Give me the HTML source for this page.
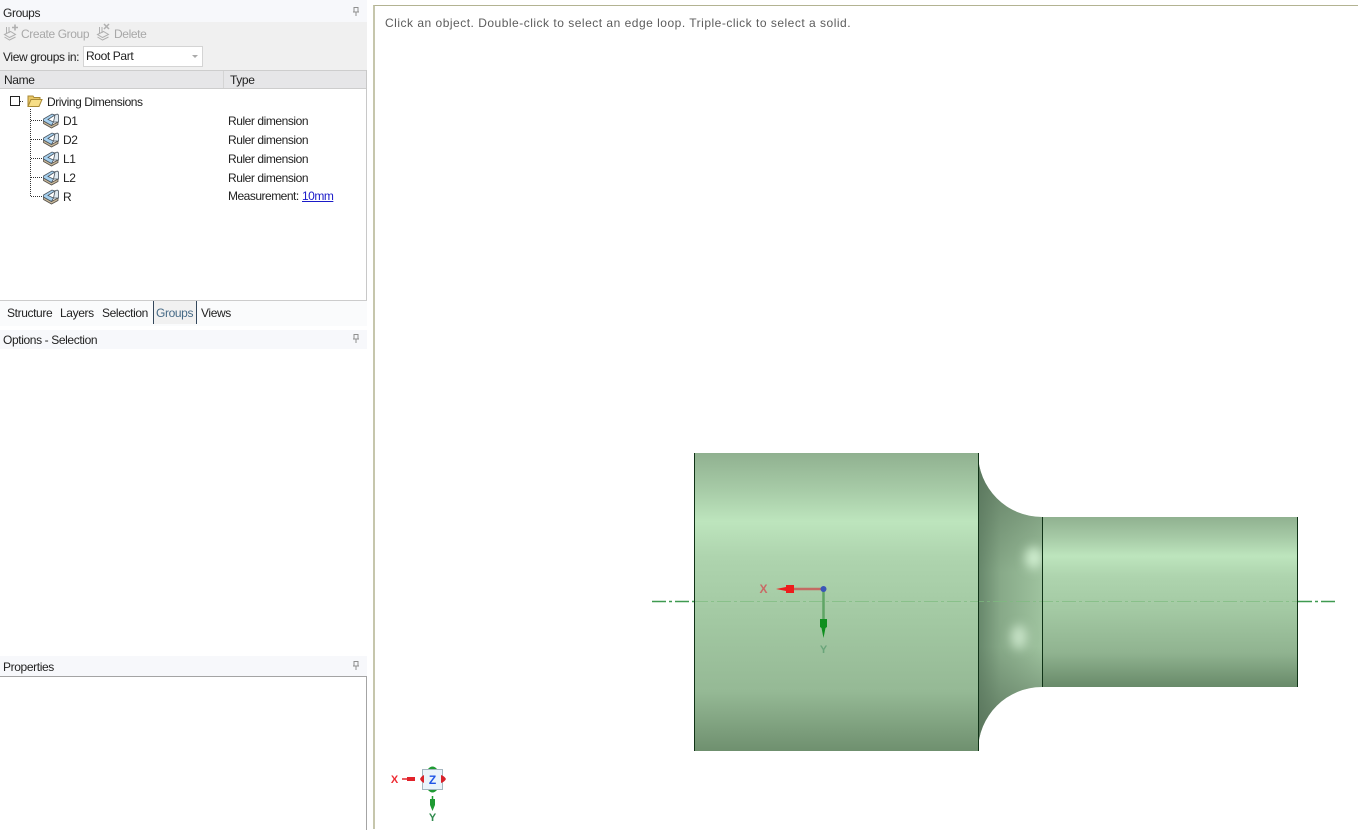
<!DOCTYPE html>
<html>
<head>
<meta charset="utf-8">
<style>
html,body{margin:0;padding:0;width:1358px;height:829px;overflow:hidden;background:#fff;font-family:"Liberation Sans",sans-serif;font-size:12px;color:#222}
.a{position:absolute;white-space:nowrap;line-height:14px;letter-spacing:-.38px}
.b{position:absolute}
</style>
</head>
<body>
<div class="b" style="left:0;top:0;width:367px;height:22px;background:#f7f8fb"></div>
<div class="b" style="left:0;top:22px;width:367px;height:48px;background:#f0f0f0"></div>
<div class="a" style="left:3px;top:6px">Groups</div>
<div class="a" style="left:21px;top:27px;color:#a8a8a8">Create Group</div>
<div class="a" style="left:114px;top:27px;color:#a8a8a8">Delete</div>
<svg class="b" style="left:0;top:22px" width="130" height="22">
<g fill="none" stroke="#b0b0b0"><path d="M4.500 12.500l6-3 5 3-6 3zM4.500 15l5 3 6-3M6.500 5v7M9 5v6"/><path d="M12 5.500h6M15 2.500v6" stroke-width="1.600"/>
<path d="M97.500 12.500l6-3 5 3-6 3zM97.500 15l5 3 6-3M99.500 5v7M102 5v6"/><path d="M104 2l5 5M109 2l-5 5" stroke-width="1.500"/></g>
</svg>
<div class="a" style="left:3px;top:50px">View groups in:</div>
<div class="b" style="left:83px;top:46px;width:118px;height:19px;background:#fff;border:1px solid #d4d4d4"></div>
<div class="a" style="left:86px;top:49px">Root Part</div>
<div class="b" style="left:192px;top:55px;width:0;height:0;border-left:3px solid transparent;border-right:3px solid transparent;border-top:3px solid #aaa"></div>

<div class="b" style="left:0;top:70px;width:366px;height:17px;background:#e6e6e8;border-top:1px solid #cdcdcd;border-bottom:1px solid #cdcdcd"></div>
<div class="b" style="left:223px;top:71px;width:1px;height:17px;background:#d4d4d4"></div>
<div class="a" style="left:4px;top:73px">Name</div>
<div class="a" style="left:230px;top:73px">Type</div>

<div class="b" style="left:366px;top:70px;width:1px;height:231px;background:#c8c8c8"></div>
<div class="b" style="left:0;top:300px;width:367px;height:1px;background:#cccccc"></div>

<svg class="b" style="left:0;top:90px" width="70" height="115">
<rect x="10.500" y="6.500" width="9" height="9" fill="#fff" stroke="#222"/>
<path d="M20 11.500h4M30.500 19v88M31 30.500h11M31 49.500h11M31 68.500h11M31 87.500h11M31 106.500h11" stroke="#333" stroke-dasharray="1 1"/>
<path d="M28 6h5l1 1.500h6v3H31l-3 6z" fill="#e9c766" stroke="#a98a35"/>
<path d="M28 16.500l3-7h11l-3 7z" fill="#f7de86" stroke="#a98a35"/>
<defs><g id="i">
<path d="M.5 9l8 4.500 6.500-3.500v2.500L8.500 16 .5 11.500z" fill="#c9b99a" stroke="#55504a" stroke-width=".8"/>
<path d="M.5 9V7L9 2l3 1-7 4.500 5.500 2.500-2 3.500z" fill="#a6d0ee" stroke="#4a5560" stroke-width=".8"/>
<path d="M12 3c2 -1.500 3.500-1 3.500 1v6L10.500 10z" fill="#dfe9f0" stroke="#4a5560" stroke-width=".8"/>
</g></defs>
<use href="#i" x="43" y="22"/><use href="#i" x="43" y="41"/><use href="#i" x="43" y="60"/><use href="#i" x="43" y="79"/><use href="#i" x="43" y="98"/>
</svg>
<div class="a" style="left:47px;top:95px;letter-spacing:-.43px">Driving Dimensions</div>
<div class="a" style="left:63px;top:114px">D1</div>
<div class="a" style="left:63px;top:133px">D2</div>
<div class="a" style="left:63px;top:152px">L1</div>
<div class="a" style="left:63px;top:171px">L2</div>
<div class="a" style="left:63px;top:190px">R</div>
<div class="a" style="left:228px;top:114px;letter-spacing:-.44px">Ruler dimension</div>
<div class="a" style="left:228px;top:133px;letter-spacing:-.44px">Ruler dimension</div>
<div class="a" style="left:228px;top:152px;letter-spacing:-.44px">Ruler dimension</div>
<div class="a" style="left:228px;top:171px;letter-spacing:-.44px">Ruler dimension</div>
<div class="a" style="left:228px;top:189px;letter-spacing:-.5px">Measurement:</div>
<div class="a" style="left:302px;top:189px;color:#1a1ac8;text-decoration:underline;letter-spacing:-.5px">10mm</div>

<div class="b" style="left:0;top:301px;width:367px;height:25px;background:#fafbfc"></div>
<div class="b" style="left:153px;top:301px;width:42px;height:23px;background:#f1f1f1;border-left:1px solid #33475b;border-right:1px solid #33475b"></div>
<div class="a" style="left:7px;top:306px">Structure</div>
<div class="a" style="left:60px;top:306px">Layers</div>
<div class="a" style="left:102px;top:306px">Selection</div>
<div class="a" style="left:156px;top:306px;color:#466a86">Groups</div>
<div class="a" style="left:201px;top:306px">Views</div>

<div class="b" style="left:0;top:330px;width:367px;height:19px;background:#f7f8fb"></div>
<div class="a" style="left:3px;top:333px">Options - Selection</div>
<div class="b" style="left:0;top:656px;width:367px;height:20px;background:#f7f8fb"></div>
<div class="a" style="left:3px;top:660px">Properties</div>
<div class="b" style="left:0;top:676px;width:366px;height:153px;border-top:1px solid #a4a4a4;border-right:1px solid #a4a4a4"></div>

<svg class="b" style="left:350px;top:0" width="12" height="680">
<defs><path id="p" d="M4 7V2.500h4V7M3 7h6M6 7v4M4 2.500h4" fill="none" stroke="#8f8f8f"/></defs>
<use href="#p" y="5"/><use href="#p" y="332"/><use href="#p" y="659"/>
</svg>

<div class="b" style="left:373px;top:5px;width:985px;height:824px;border-top:1px solid #b3b392;border-left:2px solid #c6c6ac;box-sizing:border-box"></div>
<div class="a" style="left:385px;top:16px;font-size:12px;color:#5c5c5c;letter-spacing:.5px">Click an object. Double-click to select an edge loop. Triple-click to select a solid.</div>

<svg class="b" style="left:375px;top:6px" width="983" height="823" viewBox="375 6 983 823">
<defs>
<linearGradient id="g1" x1="0" y1="0" x2="0" y2="1">
<stop offset="0" stop-color="#90b190"/><stop offset=".12" stop-color="#a6caa6"/><stop offset=".23" stop-color="#bde5bd"/><stop offset=".35" stop-color="#aed4ae"/><stop offset=".55" stop-color="#a3c9a3"/><stop offset=".8" stop-color="#95b995"/><stop offset="1" stop-color="#6f906f"/>
</linearGradient>
<linearGradient id="g2" x1="0" y1="0" x2="0" y2="1">
<stop offset="0" stop-color="#90b190"/><stop offset=".12" stop-color="#a6caa6"/><stop offset=".23" stop-color="#bde5bd"/><stop offset=".35" stop-color="#aed4ae"/><stop offset=".55" stop-color="#a3c9a3"/><stop offset=".8" stop-color="#90b390"/><stop offset="1" stop-color="#688a69"/>
</linearGradient>
<linearGradient id="g3" x1="978" y1="0" x2="1042" y2="0" gradientUnits="userSpaceOnUse">
<stop offset="0" stop-color="#66866a"/><stop offset=".35" stop-color="#87a988"/><stop offset="1" stop-color="#9fc39f"/>
</linearGradient>
<linearGradient id="g4" x1="0" y1="453" x2="0" y2="751" gradientUnits="userSpaceOnUse">
<stop offset="0" stop-color="#567058" stop-opacity=".8"/><stop offset=".2" stop-color="#567058" stop-opacity=".4"/><stop offset=".4" stop-color="#567058" stop-opacity="0"/><stop offset=".65" stop-color="#567058" stop-opacity="0"/><stop offset=".85" stop-color="#567058" stop-opacity=".55"/><stop offset="1" stop-color="#567058" stop-opacity=".85"/>
</linearGradient>
<filter id="bl" x="-100%" y="-100%" width="300%" height="300%"><feGaussianBlur stdDeviation="5"/></filter>
<clipPath id="fc"><path d="M978 453A64 64 0 0 0 1042 517V687A64 64 0 0 0 978 751Z"/></clipPath>
</defs>
<rect x="694" y="453" width="284" height="298" fill="url(#g1)"/>
<rect x="1042" y="517" width="255" height="170" fill="url(#g2)"/>
<path d="M978 453A64 64 0 0 0 1042 517V687A64 64 0 0 0 978 751Z" fill="url(#g3)"/>
<path d="M978 453A64 64 0 0 0 1042 517V687A64 64 0 0 0 978 751Z" fill="url(#g4)"/>
<g clip-path="url(#fc)" filter="url(#bl)">
<ellipse cx="1034" cy="558" rx="9" ry="11" fill="#cdeccd"/>
<ellipse cx="1019" cy="637" rx="8" ry="12" fill="#c6e2c6"/>
</g>
<path d="M652 601.500h42M1298 601.500h38" stroke="#3f9a50" stroke-width="1.400" stroke-dasharray="14 3 3 3"/>
<path d="M694 601.500h603" stroke="#7dbb7f" stroke-opacity=".7" stroke-dasharray="14 3 3 3"/>
<path d="M694.500 453v298M978.500 453v298M1042.500 517v170M1297.500 517v170" stroke="#0f3216" fill="none"/>

<path d="M794 589h30" stroke="#c46a62" stroke-width="2.500"/>
<path d="M776 589l10-2v-2h8v8h-8v-2z" fill="#ee1c1c"/>
<path d="M823.500 589v30" stroke="#5fa565" stroke-width="2.500"/>
<path d="M820 619h7v8l-1.500 1-2 10-2-10-1.500-1z" fill="#0f8f1f"/>
<circle cx="823.500" cy="589" r="3" fill="#3a55b8"/>
<text x="763.500" y="593" text-anchor="middle" font-size="12" font-weight="bold" fill="#c96a66">X</text>
<text x="823.500" y="653" text-anchor="middle" font-size="11" font-weight="bold" fill="#6aa57a">Y</text>

<rect x="422.500" y="769.500" width="20" height="20" fill="#eaf4fb" stroke="#a4b6bf"/>
<text x="432.500" y="784" text-anchor="middle" font-size="12" font-weight="bold" fill="#1f55e6">Z</text>
<path d="M402 779h12" stroke="#e2222a" stroke-width="1.500"/>
<path d="M407 777h8v4h-8z" fill="#e2222a"/>
<path d="M424 775a8 8 0 0 0-4 4 8 8 0 0 0 4 4zM441 775a8 8 0 0 1 5 4 8 8 0 0 1-5 4z" fill="#d8222a"/>
<path d="M428 769q4.500-5 9 0zM428 790q4.500 5 9 0z" fill="#1f9a33"/>
<path d="M432.500 796v4" stroke="#1f9a33" stroke-width="1.500"/>
<path d="M430 799h5v6l-2.500 6-2.500-6z" fill="#1f9a33"/>
<text x="394.500" y="783" text-anchor="middle" font-size="11" font-weight="bold" fill="#ee2b33">X</text>
<text x="432.500" y="821" text-anchor="middle" font-size="11" font-weight="bold" fill="#2f8a4d">Y</text>
</svg>
</body>
</html>
